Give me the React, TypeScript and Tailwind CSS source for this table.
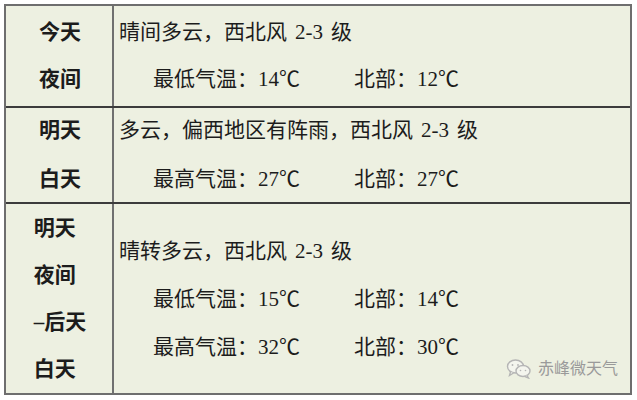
const font = { fontFamily: '"Liberation Serif", "Noto Sans CJK SC", serif' };

type Row = {
  labels: string[];
  lead: [string, string];
  temps: [string, string][];
  labelLh: string;
  bodyLh: string;
  height: string;
};

const rows: Row[] = [
  {
    labels: ["今天", "夜间"],
    lead: ["晴间多云，西北风", "级"],
    temps: [["最低气温：14℃", "北部：12℃"]],
    labelLh: "leading-[47px]",
    bodyLh: "leading-[47px]",
    height: "h-[102px]",
  },
  {
    labels: ["明天", "白天"],
    lead: ["多云，偏西地区有阵雨，西北风", "级"],
    temps: [["最高气温：27℃", "北部：27℃"]],
    labelLh: "leading-[49px]",
    bodyLh: "leading-[49px]",
    height: "h-[96px]",
  },
  {
    labels: ["明天", "夜间", "–后天", "白天"],
    lead: ["晴转多云，西北风", "级"],
    temps: [
      ["最低气温：15℃", "北部：14℃"],
      ["最高气温：32℃", "北部：30℃"],
    ],
    labelLh: "leading-[47px]",
    bodyLh: "leading-[48px]",
    height: "h-[189px]",
  },
];

const WeChatMark = () => (
  <svg width="26" height="20" viewBox="0 0 26 20" fill="none" stroke="#b5b5b5" strokeWidth="1.4">
    <ellipse cx="9.5" cy="7.5" rx="8" ry="6.5" fill="#f4f5ee" />
    <path d="M4.5 13 L3.5 16.5 L7.5 14" fill="#f4f5ee" />
    <ellipse cx="17" cy="12" rx="7" ry="5.5" fill="#f4f5ee" />
    <path d="M21 16.5 L22.5 19 L18.5 17.3" fill="#f4f5ee" />
    <circle cx="6.5" cy="6" r="0.9" fill="#b5b5b5" stroke="none" />
    <circle cx="12" cy="6" r="0.9" fill="#b5b5b5" stroke="none" />
    <circle cx="14.5" cy="11.5" r="0.8" fill="#b5b5b5" stroke="none" />
    <circle cx="19.5" cy="11.5" r="0.8" fill="#b5b5b5" stroke="none" />
  </svg>
);

export default function App() {
  return (
    <div className="w-[637px] h-[400px] bg-white pt-[4px] pl-[4px]" style={font}>
      <div className="relative w-[628px] border-2 border-[#6e6e6e] bg-[#edf0e1] text-[21px] text-[#1c1c1c]">
        {rows.map((row, i) => (
          <div
            key={i}
            className={`flex ${row.height} ${i < rows.length - 1 ? "border-b-2 border-[#3c3c3c]" : ""}`}
          >
            <div className="w-[108px] shrink-0 border-r-2 border-[#707070] flex items-center justify-center">
              <div className={`font-bold ${row.labelLh} pl-[2px]`}>
                {row.labels.map((l) => (
                  <div key={l}>{l}</div>
                ))}
              </div>
            </div>
            <div className={`flex-1 flex flex-col justify-center pl-[5px] ${row.bodyLh}`}>
              <div>
                {row.lead[0]}
                <span className="mx-[8px]">2-3</span>
                {row.lead[1]}
              </div>
              {row.temps.map(([a, b]) => (
                <div key={a} className="flex pl-[34px]">
                  <span className="w-[201px] shrink-0">{a}</span>
                  <span>{b}</span>
                </div>
              ))}
            </div>
          </div>
        ))}
        <div className="absolute right-[12px] bottom-[12px] flex items-center gap-[6px] text-[16px] text-[#9a9a9a]">
          <WeChatMark />
          <span>赤峰微天气</span>
        </div>
      </div>
    </div>
  );
}
